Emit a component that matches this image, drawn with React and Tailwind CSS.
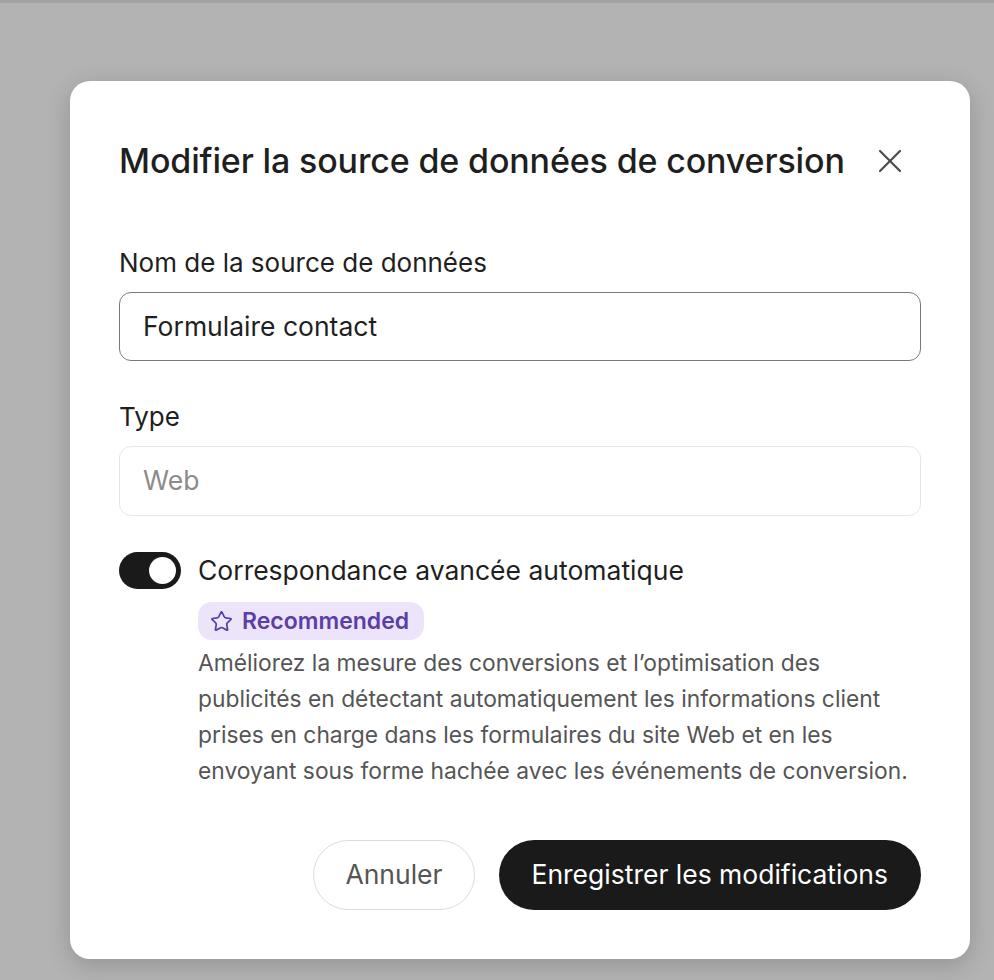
import { X, Star } from 'lucide-react';

const FONT = { fontFamily: 'Inter, "Noto Sans", sans-serif' };

const DESCRIPTION = [
  'Améliorez la mesure des conversions et l’optimisation des',
  'publicités en détectant automatiquement les informations client',
  'prises en charge dans les formulaires du site Web et en les',
  'envoyant sous forme hachée avec les événements de conversion.',
];

const Toggle = ({ on }) => (
  <button
    type="button"
    role="switch"
    aria-checked={on}
    className="flex h-[37px] w-[62px] shrink-0 items-center justify-end rounded-full bg-[#1a1a1a] pr-[5px]"
  >
    <span className="block h-[27px] w-[27px] rounded-full bg-white" />
  </button>
);

export default function App() {
  return (
    <div
      className="flex min-h-[980px] w-full flex-col border-t-[3px] border-[#a2a2a2] bg-[#b3b3b3] pl-[70px] pt-[78px]"
      style={FONT}
    >
      <div className="w-[900px] rounded-[20px] bg-white px-[49px] pb-[49px] pt-[57px] shadow-[0_6px_24px_rgba(0,0,0,0.18)]">
        <div className="flex h-[46px] items-center justify-between">
          <h2 className="whitespace-nowrap text-[34px] font-medium leading-[46px] tracking-[-0.15px] text-[#1f1f1f]">
            Modifier la source de données de conversion
          </h2>
          <button type="button" aria-label="Fermer" className="mr-[11px] text-[#4a4a4a]">
            <X className="h-[40px] w-[40px]" strokeWidth={1.3} />
          </button>
        </div>

        <label className="mt-[62px] block text-[26px] leading-[34px] text-[#1f1f1f]">
          Nom de la source de données
        </label>
        <div className="mt-[12px] flex h-[69px] items-center rounded-[12px] border-[1.5px] border-[#7a7a7a] px-[23px] text-[26.5px] text-[#1f1f1f]">
          Formulaire contact
        </div>

        <label className="mt-[39px] block text-[26px] leading-[34px] text-[#1f1f1f]">Type</label>
        <div className="mt-[12px] flex h-[70px] items-center rounded-[12px] border-[1.5px] border-[#e6e6e6] px-[23px] text-[26.5px] text-[#8c8c8c]">
          Web
        </div>

        <div className="mt-[36px] flex gap-[17px]">
          <Toggle on />
          <div className="flex flex-col items-start">
            <span className="text-[26.5px] leading-[37px] text-[#1f1f1f]">
              Correspondance avancée automatique
            </span>
            <span className="mt-[13px] flex h-[38px] items-center gap-[9px] rounded-[14px] bg-[#ece4fb] pl-[12px] pr-[15px] text-[23px] font-semibold text-[#5b3ea6]">
              <Star className="h-[23px] w-[23px]" strokeWidth={1.8} />
              Recommended
            </span>
            <p className="mt-[5px] text-[22.8px] leading-[36px] text-[#555555]">
              {DESCRIPTION.map((line) => (
                <span key={line} className="block whitespace-nowrap">
                  {line}
                </span>
              ))}
            </p>
          </div>
        </div>

        <div className="mt-[51px] flex justify-end gap-[24px]">
          <button
            type="button"
            className="h-[70px] rounded-full border-[1.5px] border-[#dcdcdc] px-[31px] text-[26.5px] text-[#555555]"
          >
            Annuler
          </button>
          <button
            type="button"
            className="h-[70px] rounded-full bg-[#1a1a1a] px-[33px] text-[26.5px] text-white"
          >
            Enregistrer les modifications
          </button>
        </div>
      </div>
    </div>
  );
}
